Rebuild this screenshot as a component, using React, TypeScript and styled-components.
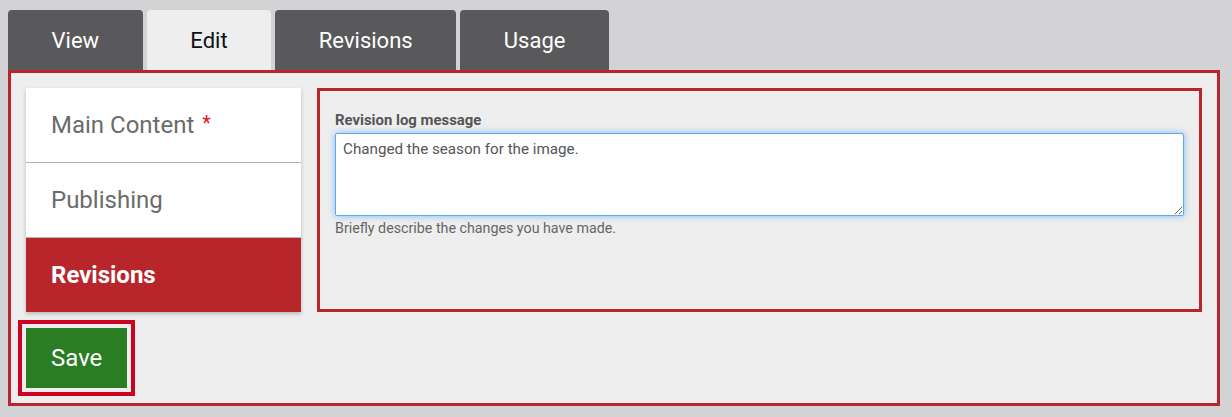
import React from "react";
import styled, { createGlobalStyle } from "styled-components";

const Global = createGlobalStyle`
  html, body { margin: 0; padding: 0; background: #d3d3d5; }
  body { font-family: Roboto, "Liberation Sans", Arial, sans-serif; }
  * { box-sizing: border-box; }
`;

const Page = styled.div`
  padding: 10px 12px 11px 8px;
  background: #d3d3d5;
`;

const TabBar = styled.div`
  display: flex;
  gap: 4px;
  height: 60px;
`;

const Tab = styled.div<{ $active?: boolean }>`
  display: flex;
  align-items: center;
  justify-content: center;
  padding: 0 43.6px;
  height: 60px;
  border-radius: 4px 4px 0 0;
  background: ${(p) => (p.$active ? "#eeeeee" : "#59595b")};
  color: ${(p) => (p.$active ? "#111" : "#fff")};
  font-size: 22px;
  font-weight: 400;
`;

const Panel = styled.div`
  border: 3px solid #b8262c;
  background: #eeeeee;
  padding: 15px 15px 15px 15px;
`;

const Row = styled.div`
  display: flex;
  gap: 16px;
  align-items: stretch;
`;

const Sidebar = styled.div`
  width: 275px;
  flex: none;
  background: #fff;
  box-shadow: 0 2px 4px rgba(0, 0, 0, 0.22);
  display: flex;
  flex-direction: column;
`;

const SideItem = styled.div<{ $active?: boolean; $last?: boolean }>`
  height: ${(p) => (p.$last ? "74px" : "75px")};
  display: flex;
  align-items: center;
  padding-left: 25px;
  font-size: 24px;
  font-weight: ${(p) => (p.$active ? 700 : 400)};
  color: ${(p) => (p.$active ? "#fff" : "#6b6b6b")};
  background: ${(p) => (p.$active ? "#b8262c" : "#fff")};
  border-bottom: ${(p) => (p.$last ? "none" : "1px solid #b4b4ae")};
`;

const Star = styled.span`
  color: #e8141a;
  font-size: 20px;
  margin-left: 8px;
  align-self: flex-start;
  margin-top: 23px;
`;

const Content = styled.div`
  flex: 1;
  border: 3px solid #b8262c;
  padding: 20px 15px 15px 15px;
`;

const Label = styled.div`
  font-size: 14.9px;
  line-height: 18px;
  font-weight: 700;
  color: #555;
  margin-bottom: 4px;
`;

const TextArea = styled.textarea`
  display: block;
  width: 100%;
  height: 83px;
  border: 1px solid #5aabef;
  border-radius: 2px;
  box-shadow: 0 0 7px rgba(90, 170, 245, 0.75);
  padding: 5px 7px;
  font-family: Roboto, "Liberation Sans", Arial, sans-serif;
  font-size: 15.2px;
  line-height: 20px;
  color: #555;
  background: #fff;
  resize: vertical;
  outline: none;
`;

const Help = styled.div`
  margin-top: 3px;
  font-size: 14.25px;
  line-height: 18px;
  color: #666;
`;

const Actions = styled.div`
  margin-top: 16px;
  display: flex;
`;

const SaveButton = styled.button`
  height: 60px;
  padding: 0 25px;
  border: none;
  background: #2b7d24;
  color: #fff;
  font-family: Roboto, "Liberation Sans", Arial, sans-serif;
  font-size: 24px;
  outline: 4px solid #cc0422;
  outline-offset: 4px;
  cursor: pointer;
`;

export default function App() {
  return (
    <>
      <Global />
      <Page>
        <TabBar>
          <Tab>View</Tab>
          <Tab $active>Edit</Tab>
          <Tab>Revisions</Tab>
          <Tab>Usage</Tab>
        </TabBar>
        <Panel>
          <Row>
            <Sidebar>
              <SideItem>
                Main Content<Star>*</Star>
              </SideItem>
              <SideItem>Publishing</SideItem>
              <SideItem $active $last>
                Revisions
              </SideItem>
            </Sidebar>
            <Content>
              <Label>Revision log message</Label>
              <TextArea defaultValue="Changed the season for the image." />
              <Help>Briefly describe the changes you have made.</Help>
            </Content>
          </Row>
          <Actions>
            <SaveButton>Save</SaveButton>
          </Actions>
        </Panel>
      </Page>
    </>
  );
}
